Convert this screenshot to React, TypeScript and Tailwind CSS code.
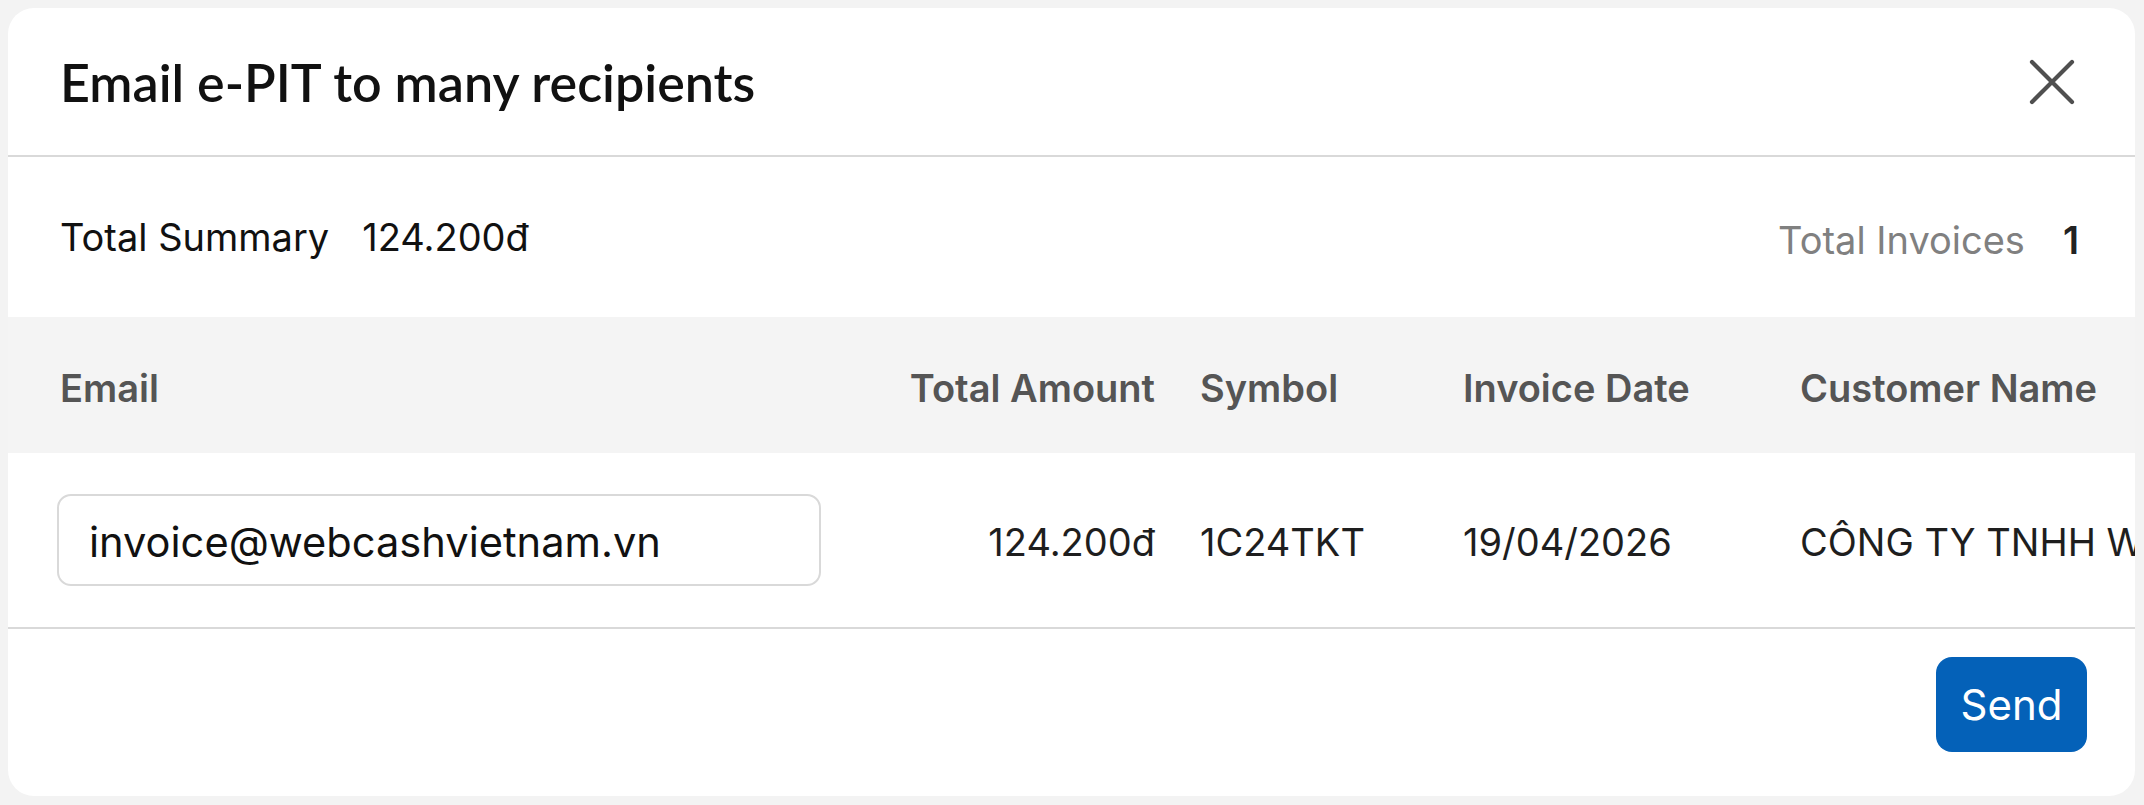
import React from 'react';

const body = "font-['Inter','Noto_Sans',sans-serif]";

const CloseIcon = () => (
  <svg width="46" height="46" viewBox="0 0 46 46" fill="none">
    <path d="M3 3L43 43M43 3L3 43" stroke="#4f4f4f" strokeWidth="4.2" strokeLinecap="round" />
  </svg>
);

const rows = [
  {
    email: 'invoice@webcashvietnam.vn',
    amount: '124.200đ',
    symbol: '1C24TKT',
    date: '19/04/2026',
    customer: 'CÔNG TY TNHH WEBCASH VIỆT NAM',
  },
];

const App: React.FC = () => {
  return (
    <div className={`w-[2144px] h-[805px] bg-[#f3f3f3] pl-2 pt-2 pr-[9px] pb-[9px] ${body}`}>
      <div className="h-full w-full rounded-[26px] bg-white overflow-hidden flex flex-col">
        {/* header */}
        <div className="h-[149px] shrink-0 flex items-center justify-between pl-[52px] pr-[60px] border-b-2 border-[#d9d9d9]">
          <h1 className="font-['Lato','Noto_Sans',sans-serif] font-semibold text-[52px] leading-none text-[#111]">
            Email e-PIT to many recipients
          </h1>
          <button className="flex items-center justify-center">
            <CloseIcon />
          </button>
        </div>

        {/* summary */}
        <div className="h-[160px] shrink-0 flex items-center justify-between pl-[52px] pr-[56px] text-[38px]">
          <div className="flex items-center gap-[33px] text-[#111]">
            <span>Total Summary</span>
            <span>124.200đ</span>
          </div>
          <div className="flex items-center gap-[38px] pt-[6px]">
            <span className="text-[#808080]">Total Invoices</span>
            <span className="font-semibold text-[#222]">1</span>
          </div>
        </div>

        {/* table head */}
        <div className="h-[136px] shrink-0 bg-[#f4f4f4] grid grid-cols-[872px_275px_308px_337px_1fr] items-center pt-[6px] text-[38px] font-semibold text-[#555] whitespace-nowrap">
          <div className="pl-[52px]">Email</div>
          <div className="text-right">Total Amount</div>
          <div className="pl-[45px]">Symbol</div>
          <div>Invoice Date</div>
          <div>Customer Name</div>
        </div>

        {/* table body */}
        {rows.map((r) => (
          <div
            key={r.email}
            className="h-[176px] shrink-0 grid grid-cols-[872px_275px_308px_337px_1fr] items-center text-[38px] text-[#1e1e1e] whitespace-nowrap border-b-2 border-[#d9d9d9]"
          >
            <div className="pl-[49px]">
              <div className="w-[764px] h-[92px] rounded-[14px] border-2 border-[#d9d9d9] flex items-center pl-[30px] pt-[4px] text-[41.6px] text-[#111]">
                {r.email}
              </div>
            </div>
            <div className="text-right pt-[4px]">{r.amount}</div>
            <div className="pl-[45px] pt-[4px]">{r.symbol}</div>
            <div className="pt-[4px]">{r.date}</div>
            <div className="overflow-hidden pt-[4px]">{r.customer}</div>
          </div>
        ))}

        {/* footer */}
        <div className="flex-1 flex justify-end items-start pt-[28px] pr-[48px]">
          <button className="w-[151px] h-[95px] rounded-[16px] bg-[#0461b8] text-white text-[42px] flex items-center justify-center">
            Send
          </button>
        </div>
      </div>
    </div>
  );
};

export default App;
